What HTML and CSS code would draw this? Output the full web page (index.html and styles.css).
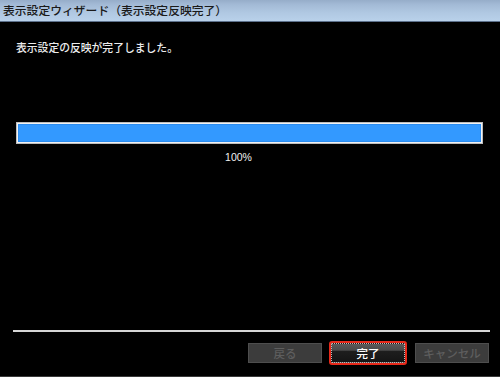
FILE: index.html
```html
<!DOCTYPE html>
<html lang="ja">
<head>
<meta charset="utf-8">
<title>表示設定ウィザード</title>
<link rel="stylesheet" href="styles.css">
</head>
<body>
<div class="window">
  <div class="titlebar">表示設定ウィザード（表示設定反映完了）</div>
  <div class="content">
    <p class="message">表示設定の反映が完了しました。</p>
    <div class="progress"><div class="progress-fill" style="width:100%"></div></div>
    <div class="percent">100%</div>
  </div>
  <div class="footer">
    <div class="separator"></div>
    <div class="buttons">
      <button class="btn btn-disabled">戻る</button>
      <button class="btn btn-primary">完了</button>
      <button class="btn btn-disabled">キャンセル</button>
    </div>
  </div>
</div>
</body>
</html>
```
FILE: styles.css
```css
html, body {
  margin: 0;
  padding: 0;
  background: #000;
}
.window {
  width: 500px;
  height: 377px;
  box-sizing: border-box;
  display: flex;
  flex-direction: column;
  background: #000;
  border-bottom: 1px solid #3a3a3a;
  font-family: "Noto Sans CJK JP", "Liberation Sans", sans-serif;
}
.titlebar {
  height: 21px;
  border-bottom: 1px solid #5d718c;
  background: linear-gradient(#96adc9 0%, #a3bad6 22%, #b0c8e2 60%, #b9d1ea 100%);
  color: #1a1a1a;
  font-size: 11.8px;
  font-weight: 500;
  line-height: 20px;
  padding-left: 3px;
  white-space: nowrap;
}
.content {
  padding: 0 16px 0 16px;
  display: flex;
  flex-direction: column;
}
.message {
  margin: 18px 0 0 0;
  color: #ececec;
  font-size: 10.8px;
  font-weight: 500;
  line-height: 14px;
}
.progress {
  margin-top: 68px;
  width: 467px;
  height: 22px;
  box-sizing: border-box;
  border: 1px solid #bdbdbd;
  padding: 1px;
  background: #f2f2f2;
}
.progress-fill {
  height: 100%;
  background: #3399ff;
  box-shadow: inset 0 0 0 1px #2b8cf0;
}
.percent {
  margin-top: 7px;
  text-align: center;
  color: #f0f0f0;
  font-family: "Liberation Sans", sans-serif;
  font-size: 10.5px;
  line-height: 12px;
  padding-right: 23px;
}
.footer {
  margin-top: auto;
  padding-bottom: 13px;
}
.separator {
  margin: 0 10px 0 13px;
  height: 2px;
  background: #d6d6d6;
}
.buttons {
  margin-top: 11px;
  display: flex;
  justify-content: flex-end;
  gap: 9px;
  padding-right: 11px;
}
.btn {
  width: 74px;
  height: 20px;
  box-sizing: border-box;
  margin: 0;
  padding: 0;
  font-family: "Noto Sans CJK JP", "Liberation Sans", sans-serif;
  font-size: 11.5px;
  font-weight: 500;
  line-height: 16px;
}
.btn-disabled {
  background: #3c3c3c;
  border: 1px solid #4e4e4e;
  color: #5e5e5e;
}
.btn-primary {
  background: linear-gradient(#5a5a5a 0%, #4a4a4a 35%, #1e1e1e 40%, #151515 100%);
  border: 1px dotted #bbbbbb;
  color: #ffffff;
  outline: 2px solid #e8291a;
  outline-offset: 0;
  border-radius: 1px;
  margin-right: 1px;
}
```
